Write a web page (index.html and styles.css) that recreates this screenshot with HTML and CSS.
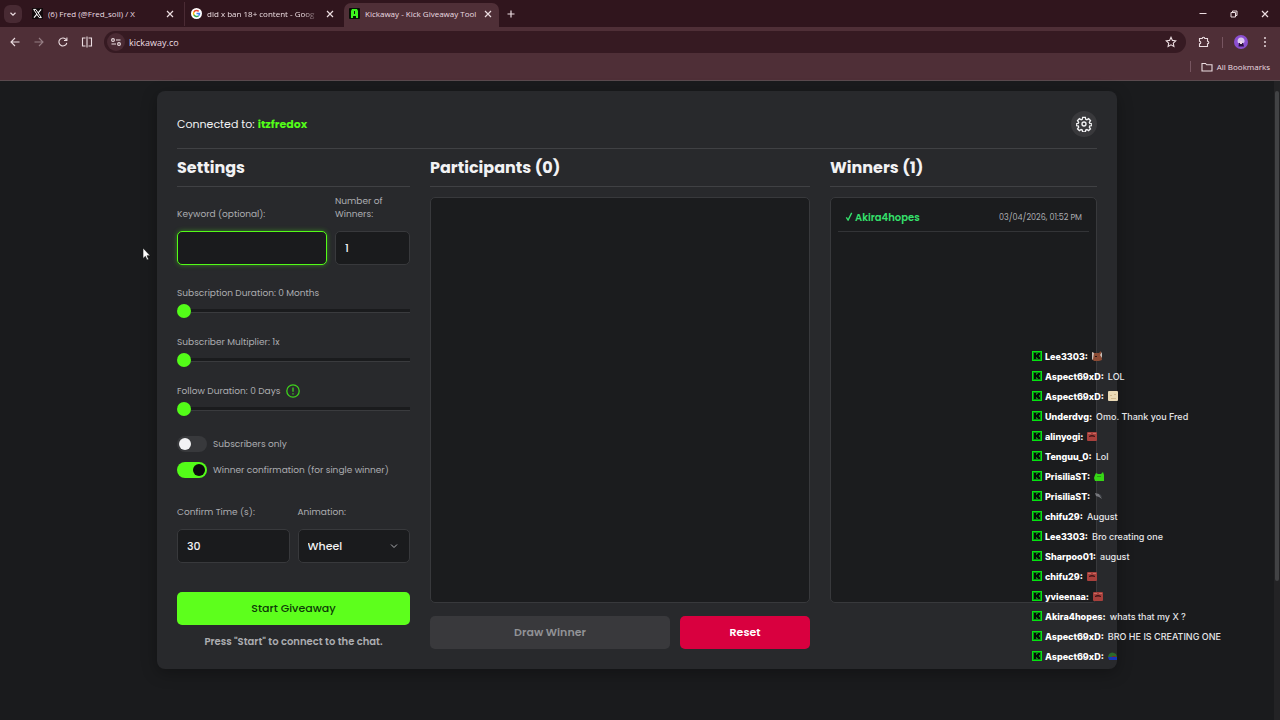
FILE: index.html
```html
<!DOCTYPE html>
<html lang="en">
<head>
  <meta charset="UTF-8">
  <meta name="viewport" content="width=device-width, initial-scale=1.0">
  <title>Kickaway - Kick Giveaway Tool</title>
  <link rel="stylesheet" href="styles.css">
</head>
<body>
  <!-- shared symbols -->
  <svg class="defs" aria-hidden="true">
    <symbol id="close" viewBox="0 0 8 8"><path d="M1 1l6 6M7 1L1 7" stroke="currentColor" stroke-width="1.2" fill="none"/></symbol>
    <symbol id="kick" viewBox="0 0 10 10">
      <rect width="10" height="10" fill="#06e312"/>
      <rect x="1" y="1" width="8" height="8" fill="#0a8a14"/>
      <path d="M2 2h2v2h1V3h1V2h2v2H7v2h1v2H6V7H5V6H4v2H2z" fill="#040f06"/>
    </symbol>
    <symbol id="emote-red" viewBox="0 0 10 10">
      <rect width="10" height="9" y="1" rx="1" fill="#a8403c"/>
      <path d="M2 5q3-2 6 0v1q-3-1-6 0z" fill="#3d1416"/>
      <path d="M1 2h3v1H1zM6 2h3v1H6z" fill="#c96a60"/>
    </symbol>
  </svg>

  <header class="browser">
    <div class="tabs">
      <button class="tab-search" aria-label="Search tabs"><svg viewBox="0 0 8 8"><path d="M1.5 2.8L4 5.2l2.500-2.400" stroke="currentColor" stroke-width="1.2" fill="none"/></svg></button>
      <div class="tab">
        <svg class="favicon" viewBox="0 0 10 10"><rect width="10" height="10" fill="#120a0c"/><path d="M1.500 1.300h2l5 7.400h-2z" fill="none" stroke="#fff" stroke-width=".9"/><path d="M8.300 1.300L5.600 4.500M4.500 5.600L1.800 8.700" stroke="#fff"/></svg>
        <span class="tab-title">(6) Fred (@Fred_soll) / X</span>
        <button class="tab-close" aria-label="Close tab"><svg><use href="#close"/></svg></button>
      </div>
      <div class="tab tab-split">
        <svg class="favicon" viewBox="0 0 12 12">
          <circle cx="6" cy="6" r="6" fill="#fff"/>
          <g fill="none" stroke-width="1.600">
            <path d="M3.200 4.400A3.300 3.300 0 0 1 8.400 3.700" stroke="#ea4335"/>
            <path d="M3.200 7.700A3.300 3.300 0 0 1 3.200 4.300" stroke="#fbbc05"/>
            <path d="M8.300 8.400A3.300 3.300 0 0 1 3.200 7.600" stroke="#34a853"/>
            <path d="M6 6h3.300A3.300 3.300 0 0 1 8.200 8.500" stroke="#4285f4"/>
          </g>
        </svg>
        <span class="tab-title tab-fade">did x ban 18+ content - Goog</span>
        <button class="tab-close" aria-label="Close tab"><svg><use href="#close"/></svg></button>
      </div>
      <div class="tab tab-active">
        <svg class="favicon" viewBox="0 0 11 11"><rect width="11" height="11" rx="1" fill="#061006"/><path d="M3 1h5l1 2v7H7V8H4v2H2V3z" fill="#3cf51e"/><path d="M5 3h1v3H5z" fill="#061006"/></svg>
        <span class="tab-title">Kickaway - Kick Giveaway Tool</span>
        <button class="tab-close" aria-label="Close tab"><svg><use href="#close"/></svg></button>
      </div>
      <button class="tab-new" aria-label="New tab"><svg viewBox="0 0 8 8"><path d="M4 .5v7M.5 4h7" stroke="currentColor" stroke-width="1.200"/></svg></button>
      <div class="window-controls">
        <button aria-label="Minimize"><svg viewBox="0 0 8 8"><path d="M.5 3.500h7" stroke="currentColor"/></svg></button>
        <button aria-label="Restore"><svg viewBox="0 0 8 8" fill="none" stroke="currentColor"><path d="M1 2.500h4.500V7H1zM2.500 2.500V1H7v4.500H5.500"/></svg></button>
        <button aria-label="Close"><svg><use href="#close"/></svg></button>
      </div>
    </div>

    <div class="toolbar">
      <button class="tool" aria-label="Back"><svg viewBox="0 0 12 12"><path d="M10.500 6H2M6 2L2 6l4 4"/></svg></button>
      <button class="tool tool-off" aria-label="Forward"><svg viewBox="0 0 12 12"><path d="M1.500 6H10M6 2l4 4-4 4"/></svg></button>
      <button class="tool" aria-label="Reload"><svg viewBox="0 0 12 12"><path d="M9.800 6.800A4 4 0 1 1 9.200 3.700M9.900 1.500v3H7"/></svg></button>
      <button class="tool" aria-label="Split view"><svg viewBox="0 0 12 12"><path d="M4.500 2H1.500v8h3M7.500 2h3v8h-3M6 .5v11"/></svg></button>
      <div class="address">
        <button class="site-info" aria-label="Site information"><svg viewBox="0 0 12 12"><circle cx="3" cy="4" r="1.400"/><path d="M6 4h4.500M1.500 8H6"/><circle cx="9" cy="8" r="1.400"/></svg></button>
        <input class="url" type="text" value="kickaway.co" aria-label="Address">
        <button class="tool" aria-label="Bookmark"><svg viewBox="0 0 12 12"><path d="M6 1.300l1.400 3.100 3.300.4-2.400 2.300.6 3.300L6 8.800l-2.900 1.600.6-3.300L1.300 4.800l3.300-.4z"/></svg></button>
      </div>
      <button class="tool" aria-label="Extensions"><svg viewBox="0 0 12 12"><path d="M1.500 2.500h2.700a1.300 1.300 0 0 1 2.600 0h2.700v2.700a1.300 1.300 0 0 1 0 2.600v2.700h-8V7.800a1.300 1.300 0 0 0 0-2.600z"/></svg></button>
      <span class="divider"></span>
      <button class="profile" aria-label="Profile"><svg viewBox="0 0 14 14"><circle cx="7" cy="7" r="7" fill="#8b4fd0"/><path d="M3.500 6Q4 2 7.500 2.500T10.500 7l-1 1H4z" fill="#d9c6ee"/><path d="M5 8h4l1 3.500H4.500z" fill="#2a1440"/><path d="M6 6h2v3H6z" fill="#efd9e4"/></svg></button>
      <button class="tool" aria-label="Menu"><svg class="dots" viewBox="0 0 12 12"><circle cx="6" cy="2" r=".4"/><circle cx="6" cy="6" r=".4"/><circle cx="6" cy="10" r=".4"/></svg></button>
    </div>

    <div class="bookmarks">
      <span class="divider"></span>
      <a href="#" class="bookmark"><svg viewBox="0 0 12 12"><path d="M1 2.500h3.500l1.200 1.300H11V10H1z"/></svg>All Bookmarks</a>
    </div>
  </header>

  <main class="page">
    <div class="card">
      <div class="card-top">
        <div class="connected">Connected to: <strong>itzfredox</strong></div>
        <button class="gear" aria-label="Options"><svg viewBox="0 0 24 24"><circle cx="12" cy="12" r="3"/><path d="M10 2h4l.6 3 1.700.7 2.600-1.700 2.800 2.800-1.700 2.600.7 1.700 3 .6v2.600l-3 .6-.7 1.700 1.700 2.600-2.800 2.800-2.600-1.700-1.700.7-.6 3h-4l-.6-3-1.700-.7-2.600 1.700-2.800-2.800 1.700-2.600-.7-1.700-3-.6v-2.600l3-.6.7-1.700-1.700-2.600 2.800-2.800 2.600 1.700 1.700-.7z"/></svg></button>
      </div>

      <div class="columns">
        <form class="settings">
          <h2>Settings</h2>
          <div class="row row-keyword">
            <div class="field">
              <label for="keyword">Keyword (optional):</label>
              <input class="box box-focus" type="text" id="keyword">
            </div>
            <div class="field">
              <label for="winners">Number of Winners:</label>
              <input class="box" type="text" inputmode="numeric" id="winners" value="1">
            </div>
          </div>

          <div class="slider">
            <label for="sub-duration">Subscription Duration: 0 Months</label>
            <input type="range" id="sub-duration" min="0" max="12" value="0">
          </div>
          <div class="slider">
            <label for="multiplier">Subscriber Multiplier: 1x</label>
            <input type="range" id="multiplier" min="1" max="10" value="1">
          </div>
          <div class="slider">
            <label for="follow">Follow Duration: 0 Days <svg class="info" viewBox="0 0 14 14"><circle cx="7" cy="7" r="6.200"/><path d="M7 3.500v4.200M7 9.300v1.300"/></svg></label>
            <input type="range" id="follow" min="0" max="60" value="0">
          </div>

          <div class="toggles">
            <label class="toggle"><input type="checkbox"> Subscribers only</label>
            <label class="toggle"><input type="checkbox" checked> Winner confirmation (for single winner)</label>
          </div>

          <div class="row row-time">
            <div class="field">
              <label for="confirm">Confirm Time (s):</label>
              <input class="box" type="text" inputmode="numeric" id="confirm" value="30">
            </div>
            <div class="field">
              <label for="animation">Animation:</label>
              <div class="select">
                <select class="box" id="animation"><option>Wheel</option></select>
                <svg viewBox="0 0 8 8"><path d="M1 2.500l3 3 3-3"/></svg>
              </div>
            </div>
          </div>

          <button type="button" class="btn btn-start">Start Giveaway</button>
          <p class="hint">Press "Start" to connect to the chat.</p>
        </form>

        <section class="participants">
          <h2>Participants (0)</h2>
          <div class="list"></div>
          <div class="actions">
            <button class="btn btn-draw" disabled>Draw Winner</button>
            <button class="btn btn-reset">Reset</button>
          </div>
        </section>

        <section class="winners">
          <h2>Winners (1)</h2>
          <div class="list">
            <div class="winner">
              <strong><svg viewBox="0 0 8 10"><path d="M1 6l2 3 4-8"/></svg>Akira4hopes</strong>
              <time>03/04/2026, 01:52 PM</time>
            </div>
          </div>
        </section>
      </div>
    </div>
    <div class="scrollbar"><div class="thumb"></div></div>
  </main>

  <!-- stream chat, floats over the page -->
  <ul class="chat">
    <li><svg><use href="#kick"/></svg><b>Lee3303:</b><svg viewBox="0 0 10 10"><path d="M0 1l2 1h5l2-2 1 9-3 1H2L0 8z" fill="#8d4c35"/><path d="M0 1l2 1-1 6-1 1zM8 4l2-3v6z" fill="#c9bfb8"/><path d="M3 5h2v1H3z" fill="#2d1714"/></svg></li>
    <li><svg><use href="#kick"/></svg><b>Aspect69xD:</b>LOL</li>
    <li><svg><use href="#kick"/></svg><b>Aspect69xD:</b><svg viewBox="0 0 10 10"><rect width="10" height="10" rx="1" fill="#ead9b5"/><path d="M2 4h2v1H2zM6 3h2v1H6zM3 7h5v1H3z" fill="#d0b78e"/></svg></li>
    <li><svg><use href="#kick"/></svg><b>Underdvg:</b>Omo. Thank you Fred</li>
    <li><svg><use href="#kick"/></svg><b>alinyogi:</b><svg><use href="#emote-red"/></svg></li>
    <li><svg><use href="#kick"/></svg><b>Tenguu_0:</b>Lol</li>
    <li><svg><use href="#kick"/></svg><b>PrisiliaST:</b><svg viewBox="0 0 10 10"><path d="M1 4l1-2 2 1h3l2-2 1 3v6H1L0 7z" fill="#36d616"/><path d="M3 5h4v1H3z" fill="#27a311"/></svg></li>
    <li><svg><use href="#kick"/></svg><b>PrisiliaST:</b><svg viewBox="0 0 10 10"><path d="M1 2l4 1 3 5-3-2-3-1z" fill="#77787d"/><path d="M5 3l2 1 1 3z" fill="#464a50"/></svg></li>
    <li><svg><use href="#kick"/></svg><b>chifu29:</b>August</li>
    <li><svg><use href="#kick"/></svg><b>Lee3303:</b>Bro creating one</li>
    <li><svg><use href="#kick"/></svg><b>Sharpoo01:</b>august</li>
    <li><svg><use href="#kick"/></svg><b>chifu29:</b><svg><use href="#emote-red"/></svg></li>
    <li><svg><use href="#kick"/></svg><b>yvieenaa:</b><svg><use href="#emote-red"/></svg></li>
    <li><svg><use href="#kick"/></svg><b>Akira4hopes:</b>whats that my X ?</li>
    <li><svg><use href="#kick"/></svg><b>Aspect69xD:</b>BRO HE IS CREATING ONE</li>
    <li><svg><use href="#kick"/></svg><b>Aspect69xD:</b><svg viewBox="0 0 10 10"><path d="M1 3q3-3 7 0l1 3H0z" fill="#2c6a2b"/><path d="M0 6h9v3H1z" fill="#1736b8"/><path d="M4 5h4v1H4z" fill="#7d2b22"/></svg></li>
  </ul>

  <svg class="cursor" viewBox="0 0 9 14" aria-hidden="true"><path d="M1 1v10.500l2.400-2.200L5 13l1.600-.7L5 8.700h3.200z" fill="#fff" stroke="#111" stroke-width=".6"/></svg>
</body>
</html>
```
FILE: styles.css
```css
* {
  box-sizing: border-box;
}
body {
  margin: 0;
  min-height: 100vh;
  display: flex;
  flex-direction: column;
  background: #1a1b1d;
  color: #f2f2f4;
  font-family: Poppins, Inter, sans-serif;
  font-size: 10px;
}
button {
  padding: 0;
  border: none;
  background: none;
  color: inherit;
  font: inherit;
  cursor: pointer;
}
.defs {
  display: none;
}

/* browser frame */
.browser {
  background: #4f2f37;
  border-bottom: 1px solid #5a4a4e;
  color: #ecdde1;
  font-family: "Open Sans", "Noto Sans", sans-serif;
  font-size: 8px;
}
.browser button {
  display: flex;
  align-items: center;
  justify-content: center;
}
.tabs {
  display: flex;
  align-items: center;
  height: 27px;
  padding-left: 4px;
  background: #30151d;
}
.tab-search {
  width: 18px;
  height: 18px;
  border-radius: 6px;
  background: #482a33;
}
.tabs button svg {
  width: 8px;
  height: 8px;
}
.tab {
  display: flex;
  align-items: center;
  gap: 5px;
  width: 162px;
  height: 24px;
  padding: 0 8px 0 10px;
}
.tab-split {
  width: 160px;
  border-left: 1px solid #4a2b34;
  padding-left: 6px;
}
.favicon {
  width: 11px;
  height: 11px;
  flex: none;
}
.tab-title {
  flex: 1;
  overflow: hidden;
  white-space: nowrap;
}
.tab-fade {
  mask-image: linear-gradient(to right, #000 86%, transparent);
}
.tab-close {
  width: 12px;
  height: 12px;
}
.tab-active {
  align-self: flex-end;
  width: 155px;
  padding: 0 5px 3px;
  border-radius: 7px 7px 0 0;
  background: #4f2f37;
}
.tab-new {
  width: 24px;
  height: 24px;
}
.window-controls {
  display: flex;
  margin-left: auto;
}
.window-controls button {
  width: 31px;
  height: 27px;
}
.toolbar {
  display: flex;
  align-items: center;
  height: 30px;
  padding: 0 3px;
}
.tool {
  width: 24px;
  height: 24px;
}
.tool svg,
.site-info svg,
.bookmark svg {
  width: 12px;
  height: 12px;
  fill: none;
  stroke: currentColor;
  stroke-width: 1.1;
}
.tool .dots {
  fill: currentColor;
}
.tool-off {
  opacity: .45;
}
.address {
  flex: 1;
  display: flex;
  align-items: center;
  height: 22px;
  margin: 0 6px 0 5px;
  padding: 0 3px;
  border-radius: 11px;
  background: #361a22;
}
.site-info {
  width: 18px;
  height: 18px;
  border-radius: 50%;
  background: #4a2a33;
}
.url {
  flex: 1;
  padding: 0 4px;
  border: none;
  background: none;
  color: inherit;
  font: inherit;
  font-size: 9px;
  outline: none;
}
.divider {
  width: 1px;
  height: 11px;
  margin: 0 6px;
  background: #775560;
}
.profile {
  width: 24px;
  height: 24px;
}
.profile svg {
  width: 14px;
  height: 14px;
}
.bookmarks {
  display: flex;
  align-items: center;
  justify-content: flex-end;
  height: 23px;
  padding: 0 10px 4px 0;
}
.bookmark {
  display: flex;
  align-items: center;
  gap: 4px;
  margin-left: 4px;
  color: inherit;
  text-decoration: none;
}

/* page */
.page {
  flex: 1;
  display: flex;
}
.card {
  width: 100%;
  max-width: 960px;
  margin: 10px auto auto;
  padding: 20px;
  border-radius: 8px;
  background: #28292c;
  box-shadow: 0 4px 16px rgba(0, 0, 0, .3);
}
.scrollbar {
  width: 6px;
  padding: 10px 1px;
  background: #232325;
}
.thumb {
  height: 490px;
  border-radius: 3px;
  background: #424345;
}
.card-top {
  display: flex;
  align-items: center;
  justify-content: space-between;
  padding-bottom: 11px;
  border-bottom: 1px solid #404144;
}
.connected {
  font-size: 11px;
}
.connected strong {
  color: #53fc18;
}
.gear {
  display: flex;
  align-items: center;
  justify-content: center;
  width: 26px;
  height: 26px;
  border-radius: 50%;
  background: #39393c;
}
.gear svg {
  width: 16px;
  height: 16px;
  fill: none;
  stroke: #f2f2f4;
  stroke-width: 2;
}
.columns {
  display: grid;
  grid-template-columns: 233fr 380fr 267fr;
  gap: 20px;
}
h2 {
  margin: 0 0 10px;
  padding: 6px 0 6px;
  border-bottom: 1px solid #404144;
  font-size: 16px;
  line-height: 25px;
}
.settings {
  color: #acadb1;
  font-size: 9px;
}
.settings h2 {
  margin-bottom: 8px;
  color: #f2f2f4;
}
.row {
  display: grid;
  align-items: end;
  gap: 8px;
}
.row-keyword {
  grid-template-columns: 2fr 1fr;
  margin-bottom: 19px;
}
.row-time {
  grid-template-columns: 1fr 1fr;
}
.field {
  display: flex;
  flex-direction: column;
  gap: 10px;
  line-height: 13px;
}
.box {
  width: 100%;
  height: 34px;
  padding: 0 9px;
  border: 1px solid #38393c;
  border-radius: 5px;
  background: #1a1b1d;
  color: #f2f2f4;
  font: 500 11px Poppins, Inter, sans-serif;
  outline: none;
}
.box-focus {
  border-color: #53fc18;
  box-shadow: 0 0 5px rgba(83, 252, 24, .4);
}
.slider {
  height: 49px;
}
.slider label {
  display: flex;
  align-items: center;
  gap: 6px;
  height: 18px;
}
.info {
  width: 14px;
  height: 14px;
  fill: none;
  stroke: #3fd21c;
  stroke-width: 1.3;
}
.slider input {
  appearance: none;
  display: block;
  width: 100%;
  height: 14px;
  margin: 2px 0 0;
  background: none;
}
.slider input::-webkit-slider-runnable-track {
  height: 4px;
  border-bottom: 1px solid #3a3b3e;
  background: #1a1b1d;
}
.slider input::-webkit-slider-thumb {
  appearance: none;
  width: 14px;
  height: 14px;
  margin-top: -5px;
  border-radius: 50%;
  background: #53fc18;
}
.toggles {
  display: flex;
  flex-direction: column;
  gap: 10px;
  margin: 5px 0 28px;
}
.toggle {
  display: flex;
  align-items: center;
  gap: 6px;
  height: 16px;
}
.toggle input {
  appearance: none;
  width: 30px;
  height: 16px;
  margin: 0;
  padding: 2px;
  border-radius: 8px;
  background: #38393c;
}
.toggle input::before {
  content: "";
  display: block;
  width: 12px;
  height: 12px;
  border-radius: 50%;
  background: #f2f2f4;
}
.toggle input:checked {
  background: #53fc18;
}
.toggle input:checked::before {
  margin-left: auto;
  background: #0b0c0d;
}
.select {
  display: grid;
  align-items: center;
}
.select select,
.select svg {
  grid-area: 1 / 1;
}
.select select {
  appearance: none;
}
.select svg {
  justify-self: end;
  width: 8px;
  height: 8px;
  margin-right: 12px;
  fill: none;
  stroke: #acadb1;
}
.btn {
  height: 33px;
  border-radius: 5px;
  font-size: 11px;
  font-weight: 600;
}
.btn-start {
  width: 100%;
  margin-top: 29px;
  background: #5dff1c;
  color: #0d3a08;
  font-weight: 500;
}
.hint {
  margin: 9px 0 0;
  font-size: 10px;
  font-weight: 600;
  line-height: 15px;
  text-align: center;
}
.participants,
.winners {
  display: flex;
  flex-direction: column;
}
.list {
  flex: 1;
  padding: 7px;
  border: 1px solid #38393c;
  border-radius: 5px;
  background: #1b1c1e;
}
.winners .list {
  margin-bottom: 46px;
}
.actions {
  display: grid;
  grid-template-columns: 24fr 13fr;
  gap: 10px;
  margin-top: 13px;
}
.btn-draw {
  background: #39393c;
  color: #919296;
}
.btn-reset {
  background: #d9003f;
  color: #fff;
}
.winner {
  display: flex;
  align-items: center;
  justify-content: space-between;
  height: 27px;
  padding: 0 7px;
  border-bottom: 1px solid #333437;
}
.winner strong {
  color: #35e06c;
  font-weight: 600;
}
.winner svg {
  width: 8px;
  height: 9px;
  margin-right: 2px;
  fill: none;
  stroke: currentColor;
  stroke-width: 1.5;
}
.winner time {
  color: #acadb1;
  font-size: 8px;
}

/* overlays */
.chat {
  position: absolute;
  top: 346px;
  left: 1032px;
  margin: 0;
  padding: 0;
  list-style: none;
  color: #e6e6e8;
  font-family: Inter, sans-serif;
  font-size: 9px;
  font-weight: 500;
}
.chat li {
  display: flex;
  align-items: center;
  height: 20px;
  white-space: nowrap;
}
.chat svg {
  width: 10px;
  height: 10px;
}
.chat b {
  margin: 0 4px 0 3px;
  color: #fff;
  font-weight: 800;
}
.cursor {
  position: absolute;
  top: 247px;
  left: 142px;
  width: 9px;
  height: 14px;
}
```
